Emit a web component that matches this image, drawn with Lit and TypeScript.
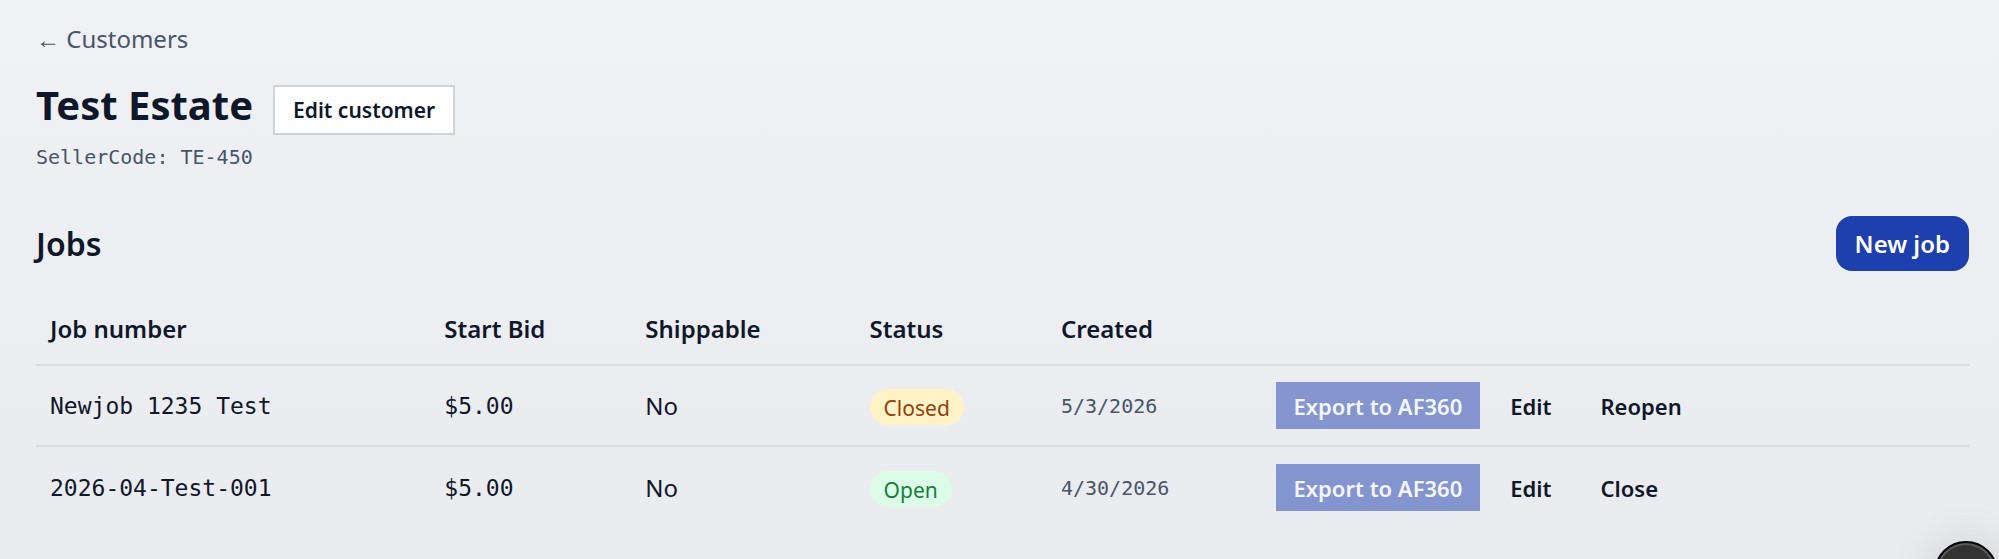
import { LitElement, html, css } from "lit";
import { customElement, state } from "lit/decorators.js";

interface Job {
  number: string;
  startBid: string;
  shippable: boolean;
  open: boolean;
  created: string;
}

@customElement("app-root")
export class AppRoot extends LitElement {
  static styles = css`
    :host {
      display: block;
      min-height: 100vh;
      box-sizing: border-box;
      overflow: hidden;
      padding: 23px 30px 24px 36px;
      background: linear-gradient(#f0f1f4, #eaebef);
      color: #0f172a;
      font-family: "Segoe UI", "Noto Sans", sans-serif;
      font-size: 24px;
      line-height: 32px;
    }
    .back {
      color: #475569;
      text-decoration: none;
    }
    .mono {
      font-family: Consolas, "DejaVu Sans Mono", monospace;
      font-size: 23px;
    }
    .muted {
      color: #475569;
      font-size: 20px;
    }
    .title-row {
      display: flex;
      align-items: flex-start;
      gap: 20px;
      margin-top: 30px;
    }
    .title {
      margin: 0;
      font-size: 40px;
      line-height: 40px;
      font-weight: 700;
    }
    .code {
      margin: 16px 0 0;
    }
    .section {
      display: flex;
      align-items: center;
      justify-content: space-between;
      margin-top: 43px;
    }
    .heading {
      margin: 0;
      font-size: 32px;
      line-height: 40px;
      font-weight: 600;
    }
    button {
      box-sizing: border-box;
      margin: 0;
      border: 2px solid transparent;
      padding: 0 17px;
      height: 47px;
      background: transparent;
      color: inherit;
      font: inherit;
      font-size: 22px;
      font-weight: 600;
      cursor: pointer;
      white-space: nowrap;
    }
    .outline {
      height: 50px;
      background: #fff;
      border-color: #cfd2da;
      padding: 0 18px;
      font-size: 21px;
    }
    .primary {
      height: 55px;
      border: 0;
      border-radius: 16px;
      padding: 0 19px;
      background: #1e40af;
      color: #fff;
      font-size: 24px;
    }
    .export {
      border: 0;
      padding: 0 18px;
      background: #1e40af;
      color: #fff;
      opacity: 0.5;
    }
    table {
      width: 100%;
      margin-top: 23px;
      border-collapse: separate;
      border-spacing: 0;
      table-layout: fixed;
      text-align: left;
    }
    th,
    td {
      box-sizing: border-box;
      padding: 0 14px;
      font-weight: 400;
      border-bottom: 2px solid #dadce1;
    }
    th {
      height: 72px;
      font-weight: 600;
    }
    td {
      height: 81px;
    }
    tbody tr:last-child td {
      border-bottom: 0;
    }
    .c-number {
      width: 20.4%;
    }
    .c-bid {
      width: 10.4%;
    }
    .c-ship {
      width: 11.6%;
    }
    .c-status {
      width: 9.9%;
    }
    .c-created {
      width: 11.1%;
    }
    .badge {
      display: inline-block;
      margin-top: 2px;
      padding: 3px 14px 1px;
      border-radius: 18px;
      font-size: 21px;
      background: #fef3c7;
      color: #92400e;
      vertical-align: middle;
    }
    .badge.open {
      background: #dcfce7;
      color: #15803d;
    }
    .actions {
      display: flex;
      gap: 11px;
    }
    .launcher {
      position: fixed;
      right: 1px;
      bottom: -46px;
      width: 64px;
      height: 64px;
      padding: 0;
      border: 2px solid #050505;
      border-radius: 50%;
      background: #333;
      box-shadow:
        inset 0 0 0 2px #5a5a5a,
        0 6px 48px rgba(0, 0, 0, 0.16);
    }
  `;

  @state() private jobs: Job[] = [
    { number: "Newjob 1235 Test", startBid: "$5.00", shippable: false, open: false, created: "5/3/2026" },
    { number: "2026-04-Test-001", startBid: "$5.00", shippable: false, open: true, created: "4/30/2026" },
  ];

  private toggle(job: Job) {
    this.jobs = this.jobs.map((j) => (j === job ? { ...j, open: !j.open } : j));
  }

  render() {
    return html`
      <a class="back" href="#customers">← Customers</a>
      <header class="title-row">
        <div>
          <h1 class="title">Test Estate</h1>
          <p class="code mono muted">SellerCode: TE-450</p>
        </div>
        <button class="outline">Edit customer</button>
      </header>
      <section>
        <div class="section">
          <h2 class="heading">Jobs</h2>
          <button class="primary">New job</button>
        </div>
        <table>
          <thead>
            <tr>
              <th class="c-number" scope="col">Job number</th>
              <th class="c-bid" scope="col">Start Bid</th>
              <th class="c-ship" scope="col">Shippable</th>
              <th class="c-status" scope="col">Status</th>
              <th class="c-created" scope="col">Created</th>
              <th scope="col" aria-label="Actions"></th>
            </tr>
          </thead>
          <tbody>
            ${this.jobs.map(
              (job) => html`<tr>
                <td class="mono">${job.number}</td>
                <td class="mono">${job.startBid}</td>
                <td>${job.shippable ? "Yes" : "No"}</td>
                <td><span class="badge ${job.open ? "open" : ""}">${job.open ? "Open" : "Closed"}</span></td>
                <td class="mono muted">${job.created}</td>
                <td>
                  <div class="actions">
                    <button class="export" disabled>Export to AF360</button>
                    <button>Edit</button>
                    <button @click=${() => this.toggle(job)}>${job.open ? "Close" : "Reopen"}</button>
                  </div>
                </td>
              </tr>`,
            )}
          </tbody>
        </table>
      </section>
      <button class="launcher" aria-label="Open menu"></button>
    `;
  }
}
